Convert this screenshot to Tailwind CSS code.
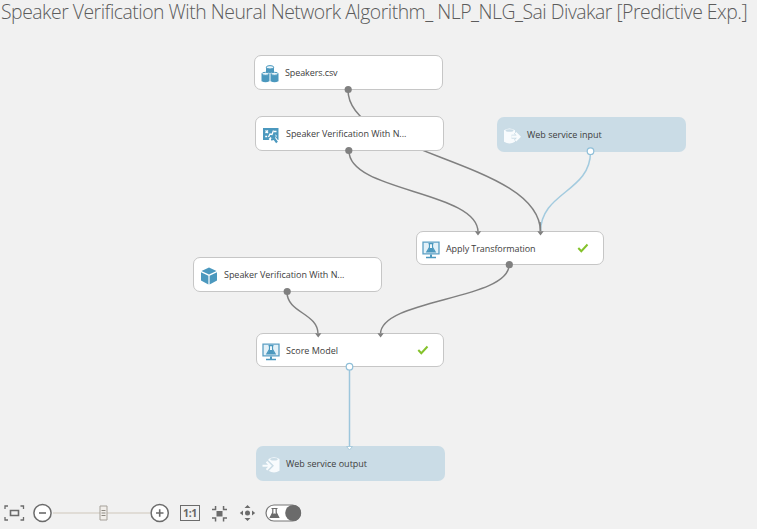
<!DOCTYPE html>
<html lang="en">
<head>
<meta charset="utf-8">
<title>Experiment canvas</title>
<script src="https://cdn.jsdelivr.net/npm/@tailwindcss/browser@4"></script>
</head>
<body class="bg-[#f1f1f1]">
<svg class="hidden">
  <symbol id="monitor" viewBox="0 0 18 18">
    <path d="M1 1.200h16v11.600H1z" fill="#e3f1f8" stroke="#5b9fc3" stroke-width="1.300"/>
    <path d="M6.500 2.600h5M7.500 3v3.300L4.800 11h8.400l-2.700-4.700V3" fill="#fff" stroke="#4b98be" stroke-width="1.200"/>
    <path d="M7.300 7h3.400l2 4H5.300zM8 13.400h2v2.400H8zM4 15.800h10V17.200H4z" fill="#4b98be"/>
  </symbol>
  <symbol id="check" viewBox="0 0 12 10"><path d="M1.300 5l3 3.200L10.500 1.500" fill="none" stroke="#84c22b" stroke-width="2"/></symbol>
</svg>
<main class="relative w-[757px] h-[529px] overflow-hidden bg-[#f1f1f1] font-['Open_Sans','Noto_Sans',sans-serif] text-[#404040]">
  <h1 id="title" class="w-max pl-px text-[19.4px] leading-[24px] font-light whitespace-pre text-[#5c5c5c] tracking-[-0.49px]">Speaker Verification With Neural Network Algorithm_ NLP_NLG_Sai Divakar [Predictive Exp.]</h1>

  <svg class="absolute inset-0" width="757" height="529" fill="none" stroke="#808080" stroke-width="1.500">
    <path d="M348 90C348 155 540.500 161 540.500 232"/>
    <path d="M349 151C349 192 478 191 478 232"/>
    <path d="M590.500 152C590.500 192 540.500 192 540.500 232" stroke="#a3cbdf"/>
    <path d="M540 222Q540.500 227 540.500 232"/>
    <path d="M287 292C287 313 318 313 318 334"/>
    <path d="M509 265C509 300 380.500 299 380.500 334"/>
    <path d="M349.500 367V447" stroke="#9dc6dc"/>
  </svg>

  <div class="absolute left-[254px] top-[55px] w-[189px] h-[35px] flex items-center rounded-[7px] border border-[#c6c6c6] bg-white pl-[6px] gap-[6px]">
    <svg class="mt-[3px]" width="18" height="18" viewBox="0 0 18 18" fill="#4b98be"><path d="M5 2.500v4.500q4 2 8 0V2.500z"/><ellipse cx="9" cy="2.300" rx="3.700" ry="1.700" fill="#eaf5fa" stroke="#4b98be"/><path d="M.5 9v7.200q4 2.200 8 0V9zM9.500 9v7.200q4 2.200 8 0V9z"/><ellipse cx="4.500" cy="8.800" rx="3.600" ry="1.500" fill="#eaf5fa" stroke="#4b98be"/><ellipse cx="13.500" cy="8.800" rx="3.600" ry="1.500" fill="#eaf5fa" stroke="#4b98be"/></svg>
    <span class="text-[9px] leading-none tracking-[-0.1px]">Speakers.csv</span>
  </div>
  <div class="absolute left-[255px] top-[116px] w-[189px] h-[35px] flex items-center rounded-[7px] border border-[#c6c6c6] bg-white pl-[6px] gap-[6px]">
    <svg class="mt-[2px]" width="18" height="18" viewBox="0 0 18 18"><path d="M1 2h15.500v12H1z" fill="#4b98be"/><path d="M3.500 4.500l2.500 2.500M6 4.500L3.500 7M6.500 11l1.500-3 2 .5 1.500-4M12 5.500h2.500M3.200 10.500h2M13 9l1.500 1.500" fill="none" stroke="#fff" stroke-width="1.300"/><path d="M11.500 11.500l4 5.500M8 14.500l2-2" stroke="#fff" stroke-width="4"/><path d="M11 11l4 5.500M9 13.500q4 0 3.500-4.500" fill="none" stroke="#4b98be" stroke-width="2.200"/></svg>
    <span class="text-[9px] leading-none tracking-[-0.04px]">Speaker Verification With N...</span>
  </div>
  <div class="absolute left-[497px] top-[117px] w-[189px] h-[35px] flex items-center rounded-[7px] bg-[#cadce6] pl-[6px] gap-[6px]">
    <svg class="mt-[3px]" width="18" height="18" viewBox="0 0 18 18"><path d="M1 3.200v11.600q5.500 3.500 11 0V3.200Q6.500-.3 1 3.200z" fill="#f8fbfd"/><ellipse cx="6.500" cy="3.500" rx="4" ry="1.300" fill="#cadce6"/><path d="M8.500 9.700h7" stroke="#cadce6" stroke-width="4"/><path d="M12 5.700l4 4-4 4" fill="none" stroke="#cadce6" stroke-width="3"/><path d="M8.500 9.700h8M12.500 5.700l4 4-4 4" fill="none" stroke="#f8fbfd" stroke-width="2.200"/></svg>
    <span class="text-[9px] leading-none">Web service input</span>
  </div>
  <div class="absolute left-[416px] top-[231px] w-[188px] h-[34px] flex items-center rounded-[7px] border border-[#c6c6c6] bg-white pl-[5px] pr-[14px] gap-[6px]">
    <svg class="mt-[3px]" width="18" height="18"><use href="#monitor"/></svg>
    <span class="text-[9px] leading-none tracking-[-0.08px]">Apply Transformation</span>
    <svg class="ml-auto" width="12" height="10"><use href="#check"/></svg>
  </div>
  <div class="absolute left-[193px] top-[257px] w-[189px] h-[35px] flex items-center rounded-[7px] border border-[#c6c6c6] bg-white pl-[6px] gap-[6px]">
    <svg class="mt-[3px]" width="18" height="18" viewBox="0 0 18 18" fill="#4b98be"><path d="M9 .5l7.500 3.500L9 7.500 1.500 4zM1 5.200l7.400 3.500V17.500L1 13.500zM17 5.200L9.600 8.700V17.500L17 13.500z"/></svg>
    <span class="text-[9px] leading-none tracking-[-0.04px]">Speaker Verification With N...</span>
  </div>
  <div class="absolute left-[256px] top-[333px] w-[188px] h-[34px] flex items-center rounded-[7px] border border-[#c6c6c6] bg-white pl-[5px] pr-[14px] gap-[6px]">
    <svg class="mt-[3px]" width="18" height="18"><use href="#monitor"/></svg>
    <span class="text-[9px] leading-none">Score Model</span>
    <svg class="ml-auto" width="12" height="10"><use href="#check"/></svg>
  </div>
  <div class="absolute left-[256px] top-[446px] w-[189px] h-[35px] flex items-center rounded-[7px] bg-[#cadce6] pl-[6px] gap-[6px]">
    <svg class="mt-[3px]" width="18" height="18" viewBox="0 0 18 18"><path d="M6.500 3v11.800q5.500 3.500 11 0V3Q12-.3 6.500 3z" fill="#f8fbfd"/><ellipse cx="12" cy="3.300" rx="3.800" ry="1.300" fill="#cadce6"/><path d="M1 9.700h7" stroke="#cadce6" stroke-width="4"/><path d="M5.500 5.700l4 4-4 4" fill="none" stroke="#cadce6" stroke-width="3.500"/><path d="M.5 9.700h8M4.500 5.700l4 4-4 4" fill="none" stroke="#f8fbfd" stroke-width="2"/></svg>
    <span class="text-[9px] leading-none">Web service output</span>
  </div>

  <svg class="absolute inset-0" width="757" height="529" fill="#808080">
    <circle cx="348.200" cy="89.500" r="3.600"/><circle cx="348.800" cy="150.500" r="3.600"/><circle cx="287.200" cy="291.500" r="3.600"/><circle cx="509.300" cy="264.700" r="3.600"/>
    <path d="M474.800 231.200h6.400l-3.200 4.300zM537.300 231.200h6.400l-3.200 4.300zM315 333.200h6.400l-3.200 4.300zM377.400 333.200h6.400l-3.200 4.300z"/>
    <g fill="#fff" stroke="#8fbfd8" stroke-width="1.200"><circle cx="590.500" cy="151.200" r="3.300"/><circle cx="349.500" cy="366.700" r="3.300"/><path d="M346.500 446.500h6l-3 3.500z" stroke="#a9cbdc" stroke-width="1"/></g>
  </svg>

  <div class="absolute left-0 top-[501px] h-6 w-[304px] flex items-center pl-[4px]">
    <svg width="21" height="18" fill="none" stroke="#6b6b6b" stroke-width="1.300"><path d="M1 5V2h3M16.500 2h3v3M1 13v3h3M16.500 16h3v-3"/><path d="M6.500 6.500h8v5h-8z" stroke-width="1.600"/></svg>
    <svg class="ml-[7px]" width="21" height="20" fill="none" stroke="#6b6b6b"><circle cx="10.500" cy="10" r="8.600" fill="#fff" stroke-width="1.500"/><path d="M7 10h7" stroke-width="1.600"/></svg>
    <svg width="97" height="18"><path d="M0 8h97v2H0z" fill="#e0dcd6"/><path d="M47 2h7v14h-7z" fill="#f1eeea" stroke="#a5a099"/><path d="M48.500 6.500h4M48.500 9h4M48.500 11.500h4" stroke="#8d8982"/></svg>
    <svg width="20" height="20" fill="none" stroke="#6b6b6b"><circle cx="9.700" cy="10" r="8.600" fill="#fff" stroke-width="1.500"/><path d="M6 10h7.500M9.700 6.300v7.500" stroke-width="1.600"/></svg>
    <span class="ml-[10px] w-[20px] h-[16px] border-[1.500px] border-[#6b6b6b] flex items-center justify-center text-[10.5px] leading-none font-bold text-[#666] tracking-[-0.3px]">1:1</span>
    <svg class="ml-[11px]" width="17" height="17" fill="#6b6b6b"><path d="M5.500 6h6v5.500h-6z"/><path d="M3.800 1h1.500v4.200H1V3.800h2.800zM11.800 1h1.500v2.800H16v1.400h-4.200zM1 12.300h4.300v4.200H3.800v-2.800H1zM11.800 12.300H16v1.400h-2.700v2.800h-1.500z"/></svg>
    <svg class="ml-[11px]" width="17" height="18" fill="#6b6b6b"><circle cx="8.500" cy="9" r="2.500"/><path d="M5.500 4L8.500 1l3 3zM5.500 14l3 3 3-3zM4 6.500L.8 9 4 11.500zM13 6.500l3.200 2.500-3.200 2.500z"/></svg>
    <svg class="ml-[9px]" width="37" height="18"><rect x="1" y="1" width="34.500" height="16" rx="8" fill="#fff" stroke="#777" stroke-width="1.200"/><circle cx="28.200" cy="9" r="8" fill="#6b6b6b"/><path d="M6.500 4.500h6M7.800 5v3.500L5.300 13.300h8.400L11.200 8.500V5" fill="none" stroke="#6b6b6b" stroke-width="1.200"/><path d="M7.300 9.500h4.400l2 3.800H5.300z" fill="#6b6b6b"/></svg>
  </div>
</main>
</body>
</html>
